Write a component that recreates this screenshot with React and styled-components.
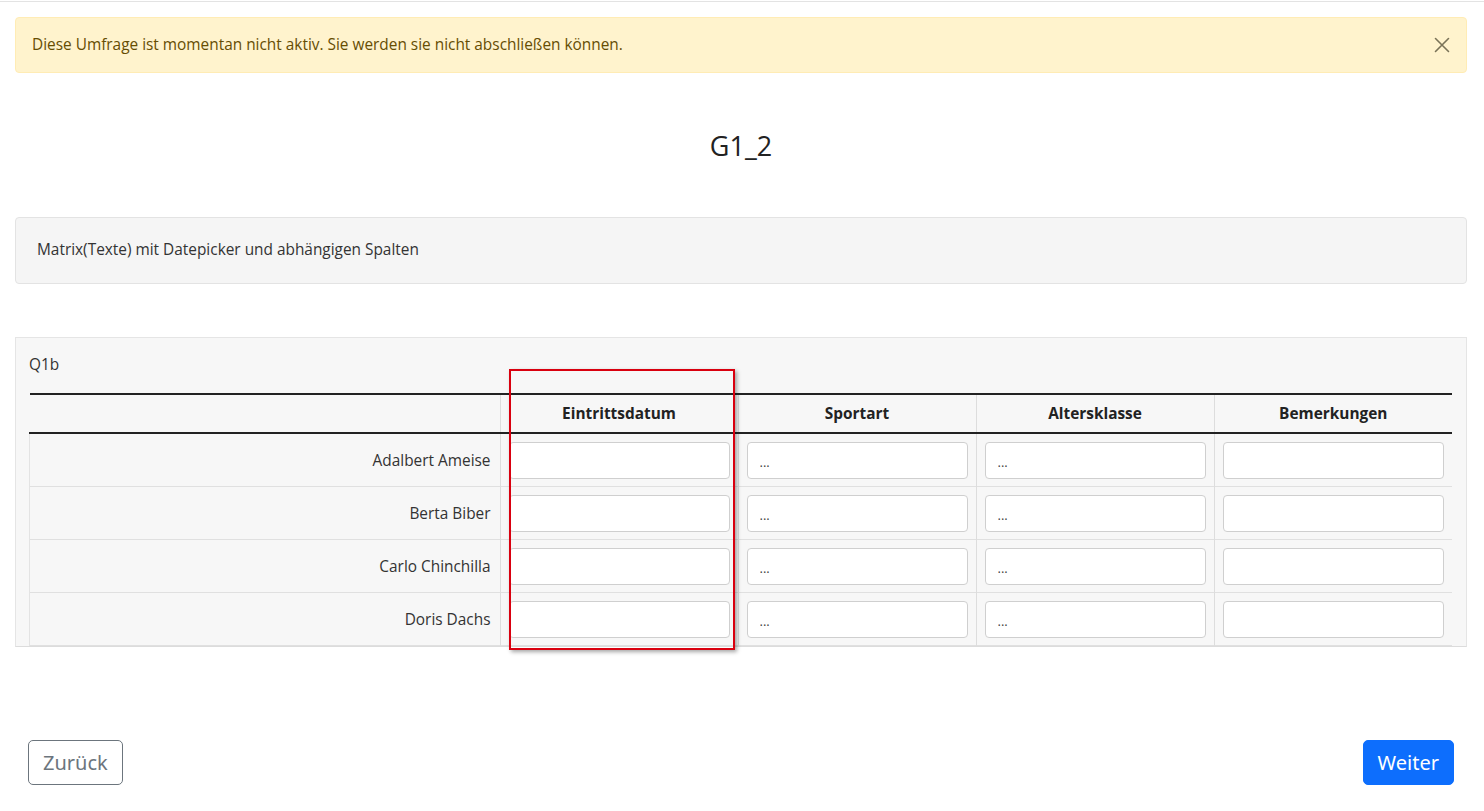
import React from 'react'
import styled, { createGlobalStyle } from 'styled-components'

const GlobalStyle = createGlobalStyle`
  * { box-sizing: border-box; }
  body {
    margin: 0;
    background: #ffffff;
    font-family: "Open Sans", "Noto Sans", sans-serif;
    color: #212529;
  }
`

const Page = styled.div`
  border-top: 1px solid #e3e3e3;
  margin-top: 1px;
  padding: 0 17px 0 15px;
`

const Alert = styled.div`
  margin-top: 15px;
  display: flex;
  align-items: center;
  justify-content: space-between;
  background: #fff3cd;
  border: 1px solid #ffecb5;
  border-radius: 4px;
  padding: 17px 15px 17px 16px;
  color: #664d03;
  font-size: 15.4px;
  line-height: 20px;
`

const CloseButton = styled.button`
  border: none;
  background: none;
  padding: 0;
  width: 18px;
  height: 18px;
  cursor: pointer;
  color: #7a7358;
  display: flex;
  align-items: center;
  justify-content: center;
`

const Title = styled.h1`
  margin: 58px 0 56px;
  text-align: center;
  font-size: 27px;
  font-weight: 400;
  line-height: 30px;
  color: #222;
`

const Description = styled.div`
  background: #f5f5f5;
  border: 1px solid #e3e3e3;
  border-radius: 4px;
  padding: 22px 21px 23px;
  font-size: 15.4px;
  line-height: 20px;
  color: #333;
`

const Panel = styled.div`
  position: relative;
  margin-top: 53px;
  background: #f7f7f7;
  border: 1px solid #e5e5e5;
  border-bottom-color: #dcdcdc;
  padding: 17px 14px 0 13px;
`

const QuestionCode = styled.div`
  font-size: 15.4px;
  line-height: 20px;
  color: #333;
  margin-bottom: 18px;
`

const Table = styled.table`
  width: 100%;
  border-collapse: collapse;
  border-top: 2px solid #222;
  font-size: 15.4px;
`

const HeadCell = styled.th`
  height: 39px;
  padding: 0 8px;
  text-align: center;
  font-weight: 700;
  color: #222;
  border-bottom: 2px solid #222;
  border-left: ${(p) => (p.$first ? 'none' : '1px solid #dddddd')};
  width: ${(p) => (p.$first ? 'auto' : '238px')};
`

const Row = styled.tr`
  border-bottom: 1px solid #e0e0e0;
`

const LabelCell = styled.td`
  height: 53px;
  padding: 1px 9px 0 8px;
  text-align: right;
  color: #333;
  border-left: 1px solid #e3e3e3;
`

const InputCell = styled.td`
  padding: 1px 8px 0 8px;
  border-left: 1px solid #dddddd;
  vertical-align: middle;
`

const TextInput = styled.input`
  display: block;
  width: 100%;
  height: 37px;
  border: 1px solid #cfcfcf;
  border-radius: 4px;
  background: #fff;
  padding: 4px 12px 0;
  font-family: inherit;
  font-size: 13px;
  color: #444;
  &::placeholder { color: #444; }
`

const Highlight = styled.div`
  position: absolute;
  left: 493px;
  top: 31px;
  width: 226px;
  height: 281px;
  border: 2px solid #d9000f;
  box-shadow: 2px 2px 4px rgba(0, 0, 0, 0.35);
  pointer-events: none;
`

const Footer = styled.div`
  margin-top: 93px;
  display: flex;
  justify-content: space-between;
  padding: 0 13px 0 13px;
`

const NavButton = styled.button`
  height: 45px;
  padding: 0 14px;
  border-radius: 5px;
  font-family: "Noto Sans", "Open Sans", sans-serif;
  font-size: 20px;
  cursor: pointer;
  border: 1px solid ${(p) => (p.$primary ? '#0d6efd' : '#6c757d')};
  background: ${(p) => (p.$primary ? '#0d6efd' : '#ffffff')};
  color: ${(p) => (p.$primary ? '#ffffff' : '#6c757d')};
`

const columns = ['Eintrittsdatum', 'Sportart', 'Altersklasse', 'Bemerkungen']
const people = ['Adalbert Ameise', 'Berta Biber', 'Carlo Chinchilla', 'Doris Dachs']
const placeholders = ['', '...', '...', '']

export default function App() {
  return (
    <>
      <GlobalStyle />
      <Page>
        <Alert>
          <span>Diese Umfrage ist momentan nicht aktiv. Sie werden sie nicht abschließen können.</span>
          <CloseButton aria-label="Schließen">
            <svg width="16" height="16" viewBox="0 0 16 16" fill="none" stroke="currentColor" strokeWidth="1.6" strokeLinecap="round">
              <path d="M1.5 1.5l13 13M14.5 1.5l-13 13" />
            </svg>
          </CloseButton>
        </Alert>

        <Title>G1_2</Title>

        <Description>Matrix(Texte) mit Datepicker und abhängigen Spalten</Description>

        <Panel>
          <QuestionCode>Q1b</QuestionCode>
          <Table>
            <thead>
              <tr>
                <HeadCell $first />
                {columns.map((c) => (
                  <HeadCell key={c}>{c}</HeadCell>
                ))}
              </tr>
            </thead>
            <tbody>
              {people.map((name) => (
                <Row key={name}>
                  <LabelCell>{name}</LabelCell>
                  {columns.map((c, i) => (
                    <InputCell key={c}>
                      <TextInput type="text" placeholder={placeholders[i]} />
                    </InputCell>
                  ))}
                </Row>
              ))}
            </tbody>
          </Table>
          <Highlight />
        </Panel>

        <Footer>
          <NavButton>Zurück</NavButton>
          <NavButton $primary>Weiter</NavButton>
        </Footer>
      </Page>
    </>
  )
}
